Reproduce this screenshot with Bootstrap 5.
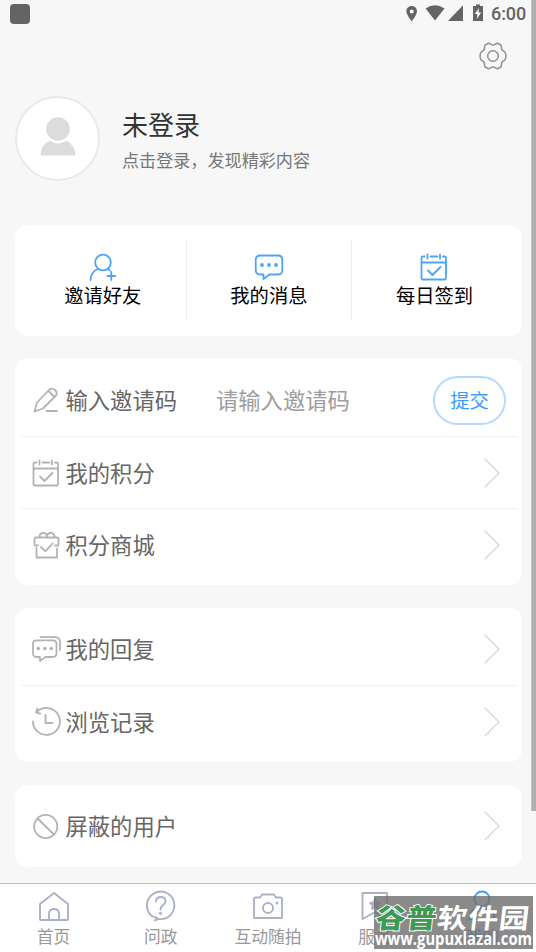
<!DOCTYPE html>
<html lang="zh-CN">
<head>
<meta charset="utf-8">
<meta name="viewport" content="width=device-width, initial-scale=1">
<title>我的</title>
<link href="https://cdn.jsdelivr.net/npm/bootstrap@5.3.0/dist/css/bootstrap.min.css" rel="stylesheet">
<style>
  body { background: #f7f7f7; font-family: "Noto Sans CJK SC", sans-serif; width: 536px; height: 952px; overflow: hidden; color: #666; }
  svg { display: block; flex: none; overflow: visible; }
  .line-icon { fill: none; stroke: currentColor; stroke-width: 1.8; stroke-linecap: round; stroke-linejoin: round; }
  .screen { height: 952px; }
  .status-bar { height: 27px; padding: 0 9px 0 10px; color: #646464; }
  .app-chip { width: 20px; height: 20px; border-radius: 4px; background: #646464; }
  .clock { font: 500 18px/27px Roboto, sans-serif; width: 36px; letter-spacing: -.1px; }
  .tool-row { height: 58px; padding: 0 29px 0 0; color: #919191; }
  .tool-row svg { stroke-width: 1.5; }
  .profile { height: 140px; padding: 11px 15px 0; }
  .avatar { width: 85px; height: 85px; border: 2px solid #e9e9e9; padding-bottom: 4px; }
  .profile-text { margin-left: 22px; padding-top: 11px; }
  .user-name { font-size: 26px; line-height: 34px; color: #333; }
  .user-hint { font-size: 17.1px; line-height: 24px; margin-top: 7px; color: #777; }
  .panel { width: 507px; margin-left: 15px; border: 0; border-radius: 13px; }
  .actions { height: 111px; padding: 15px 5px 16px; }
  .action { width: 165.6px; color: #000; padding-top: 13px; font-size: 19.3px; line-height: 28px; }
  .action + .action { border-left: 1px solid #eee; }
  .action svg { color: #4ea3f8; }
  .menu { padding: 6px 5px 5px 6px; }
  .menu-short { padding-top: 5px; }
  .menu-row { height: 72px; padding: 0 17px 0 10px; font-size: 22.3px; line-height: 32px; border: 0; }
  .menu-row + .menu-row { border-top: 1px solid #f1f1f1; }
  .menu-row .lead-icon { color: #b3b3b3; margin-right: 4.5px; }
  .menu-row .go { color: #d6d6d6; stroke-width: 1.3; stroke-linecap: butt; stroke-linejoin: miter; }
  .code-input { margin-left: 39px; width: 190px; padding: 0; font-size: 22.3px; line-height: 32px; border: 0; background: transparent; }
  .menu-row > span, .code-input { margin-top: -2px; }
  .code-input::placeholder { color: #9d9d9d; opacity: 1; }
  .submit { width: 73px; height: 49px; margin-right: -6px; padding: 0; font-size: 19.3px; color: #3b9cfc; border: 2px solid #b5d9fc; border-radius: 25px; }
  .tabs { height: 69px; border-top: 1px solid #bfbfbf; }
  .tab-item { width: 107.2px; padding-top: 4px; font-size: 16.8px; line-height: 24px; color: #999; }
  .tab-item svg { color: #adb1c6; stroke-width: 1.9; }
  .tab-item.current, .tab-item.current svg { color: #3e9df8; }
  .scroll-thumb { position: absolute; right: 0; top: 0; width: 5px; height: 811px; background: #b0b0b0; border-left: 1px solid #c4c4c4; }
  .site-stamp { position: absolute; left: 374px; top: 896px; width: 159px; height: 53px; background: rgba(112,112,112,.82); color: #fff; white-space: nowrap; }
  .stamp-name { font-size: 30px; line-height: 35px; height: 36px; font-weight: 700; transform: translateY(3px) scaleY(.9) skewX(-6deg); padding-left: 2px; letter-spacing: .8px; }
  .stamp-name b { color: #3d9a55; -webkit-text-stroke: 2px #fff; paint-order: stroke fill; }
  .stamp-url text { font: 700 17px "Open Sans", sans-serif; fill: #fff; }
</style>
<script src="https://cdn.jsdelivr.net/npm/bootstrap@5.3.0/dist/js/bootstrap.bundle.min.js"></script>
</head>
<body>
<svg width="0" height="0" class="position-absolute">
  <symbol id="calendar" viewBox="0 0 28 28"><path d="M4.5 3.5H3A1.5 1.5 0 0 0 1.5 5V25A1.5 1.5 0 0 0 3 26.500H24.500A1.500 1.500 0 0 0 26 25V5A1.500 1.500 0 0 0 24.500 3.500H23M10.500 3.500H17.500M7.500 1.500V5.500M20 1.500V5.500M1.500 9.500H26M8 17.500L12.500 22L20.500 14"/></symbol>
  <symbol id="chevron" viewBox="0 0 16 30"><path d="M.7 .8L15 15L.7 29.200"/></symbol>
</svg>
<main class="screen d-flex flex-column position-relative">
  <header class="status-bar d-flex align-items-center justify-content-between">
    <span class="app-chip"></span>
    <div class="d-flex align-items-center">
      <svg width="85" height="20" viewBox="406 4 85 20" fill="currentColor">
        <path fill-rule="evenodd" d="M411.700 6C408.600 6 406.400 8.400 406.400 11.300C406.400 15 411.700 21.300 411.700 21.300S417 15 417 11.300C417 8.400 414.800 6 411.700 6ZM411.700 9.400A2 2 0 1 1 411.700 13.400A2 2 0 1 1 411.700 9.400Z"/>
        <path d="M425.600 8.500Q435 2 444.500 8.500L435 20.500Z"/>
        <path d="M463 5.300V21H448Z"/>
        <path fill-rule="evenodd" d="M473 6H476V4.500H480V6H483V21H473ZM479 8L474.800 14H477.400L476.800 19L481.200 12.500H478.500Z"/>
      </svg>
      <span class="clock">6:00</span>
    </div>
  </header>
  <div class="tool-row d-flex justify-content-end align-items-center">
    <svg class="line-icon" width="28" height="28" viewBox="0 0 28 28"><path d="M9 1.500Q10.500 1 11.500 2.200Q14 3.800 16.500 2.200Q17.500 1 19 1.500L21.800 3Q22.800 3.800 22.400 5.500Q22.400 8.500 25 9.300Q26.300 10 26.500 11.500Q27.600 14 26.500 16.500Q26.300 18 25 18.700Q22.400 19.500 22.400 22.500Q22.800 24.200 21.800 25L19 26.500Q17.500 27 16.500 25.800Q14 24.200 11.500 25.800Q10.500 27 9 26.500L6.200 25Q5.200 24.200 5.600 22.500Q5.600 19.500 3 18.700Q1.700 18 1.500 16.500Q.4 14 1.500 11.500Q1.700 10 3 9.300Q5.600 8.500 5.600 5.500Q5.200 3.800 6.200 3Z"/><circle cx="14" cy="14" r="5.300"/></svg>
  </div>
  <section class="profile d-flex align-items-start">
    <div class="avatar rounded-circle bg-white d-flex align-items-center justify-content-center">
      <svg width="36" height="39" viewBox="0 0 36 39" fill="#dcdcdc"><circle cx="18" cy="12" r="11.800"/><path d="M.5 38.500Q1 28 9.500 23.800Q18 29 26.500 23.800Q35 28 35.500 38.500Z"/></svg>
    </div>
    <div class="profile-text">
      <div class="user-name">未登录</div>
      <div class="user-hint">点击登录，发现精彩内容</div>
    </div>
  </section>
  <section class="panel card actions flex-row">
    <div class="action d-flex flex-column align-items-center">
      <svg class="line-icon" width="28" height="28" viewBox="0 0 28 28"><circle cx="14" cy="9.500" r="7.800"/><path d="M1.500 27Q2 18 9.500 16M18.500 15.500L21 17.500M22.300 19V27M18.500 23H26.300"/></svg>
      <span>邀请好友</span>
    </div>
    <div class="action d-flex flex-column align-items-center">
      <svg class="line-icon" width="28" height="28" viewBox="0 0 28 28"><path d="M5 2.500H23Q27.300 2.500 27.300 7V17Q27.300 21.500 23 21.500H14.500L8.500 26V21.500H5Q.7 21.500 .7 17V7Q.7 2.500 5 2.500Z"/><g fill="currentColor" stroke="none"><circle cx="7" cy="12" r="1.900"/><circle cx="14" cy="12" r="1.900"/><circle cx="21" cy="12" r="1.900"/></g></svg>
      <span>我的消息</span>
    </div>
    <div class="action d-flex flex-column align-items-center">
      <svg class="line-icon" width="28" height="28"><use href="#calendar"/></svg>
      <span>每日签到</span>
    </div>
  </section>
  <section class="panel card menu" style="margin-top:22px">
    <div class="menu-row d-flex align-items-center">
      <svg class="line-icon lead-icon" width="30" height="30" viewBox="0 0 30 30"><path d="M3.500 26.500L6 17.500L18.500 4.500Q21 2.500 24 5Q27 8 25 10.500L12 23.500L3.500 26.500ZM17.500 6L23.500 12M15.500 26H26"/></svg>
      <span>输入邀请码</span>
      <input class="code-input" type="text" placeholder="请输入邀请码" aria-label="邀请码">
      <button class="submit btn ms-auto">提交</button>
    </div>
    <div class="menu-row d-flex align-items-center">
      <svg class="line-icon lead-icon" width="30" height="30" viewBox="-1 -1 30 30"><use href="#calendar" width="28" height="28"/></svg>
      <span>我的积分</span>
      <svg class="line-icon go ms-auto" width="16" height="30"><use href="#chevron"/></svg>
    </div>
    <div class="menu-row d-flex align-items-center">
      <svg class="line-icon lead-icon" width="30" height="30" viewBox="0 0 30 30"><path d="M7 15.500H4.500Q3.500 15.500 3.500 14.500V9Q3.500 7.500 5 7.500H26Q27.500 7.500 27.500 9V14.500Q27.500 15.500 26.500 15.500H24M5.500 18V27.500H26V18.500M8.500 7Q8.500 3 12.300 3Q16 3 16 7Q16 3 19.800 3Q23.500 3 23.500 7M10 17L14.500 21.300L21.500 13.500"/></svg>
      <span>积分商城</span>
      <svg class="line-icon go ms-auto" width="16" height="30"><use href="#chevron"/></svg>
    </div>
  </section>
  <section class="panel card menu menu-short" style="margin-top:23px;height:154px">
    <div class="menu-row d-flex align-items-center">
      <svg class="line-icon lead-icon" width="30" height="30" viewBox="0 0 30 30"><path d="M5.500 6.300H22Q25.500 6.300 25.500 10V19Q25.500 23 22 23H14.500L9 27V23H5.500Q2 23 2 19V10Q2 6.300 5.500 6.300ZM9.500 3.200H24Q29 3.200 29 8.500V16"/><g fill="currentColor" stroke="none"><circle cx="7.300" cy="14.500" r="1.800"/><circle cx="13.800" cy="14.500" r="1.800"/><circle cx="20.300" cy="14.500" r="1.800"/></g></svg>
      <span>我的回复</span>
      <svg class="line-icon go ms-auto" width="16" height="30"><use href="#chevron"/></svg>
    </div>
    <div class="menu-row d-flex align-items-center">
      <svg class="line-icon lead-icon" width="30" height="30" viewBox="0 0 30 30"><path d="M1.900 14.500A13.500 13.500 0 1 0 6 4.700M6.500 1.500L5 5.300L9.200 6.700M14.500 8V16H21.500"/></svg>
      <span>浏览记录</span>
      <svg class="line-icon go ms-auto" width="16" height="30"><use href="#chevron"/></svg>
    </div>
  </section>
  <section class="panel card menu menu-short" style="margin-top:23px;height:82px">
    <div class="menu-row d-flex align-items-center">
      <svg class="line-icon lead-icon" width="30" height="30" viewBox="0 0 30 30"><circle cx="14.700" cy="15.500" r="11.600"/><path d="M6.500 7.500L23 23.500"/></svg>
      <span>屏蔽的用户</span>
      <svg class="line-icon go ms-auto" width="16" height="30"><use href="#chevron"/></svg>
    </div>
  </section>
  <nav class="tabs bg-white d-flex mt-auto">
    <div class="tab-item d-flex flex-column align-items-center">
      <svg class="line-icon" width="36" height="36" viewBox="0 0 36 36"><path d="M4 16L18 5L32 16V31.500Q32 32 31.500 32H4.500Q4 32 4 31.500ZM13 31.500V26Q13 21 18 21Q23 21 23 26V31.500"/></svg>
      <span>首页</span>
    </div>
    <div class="tab-item d-flex flex-column align-items-center">
      <svg class="line-icon" width="36" height="36" viewBox="0 0 36 36"><path d="M12.500 32L15.500 30.900A13.700 13.700 0 1 0 9.500 28.400L14 29.900L12 32.400ZM13 13.500Q13 9 18 9Q22.500 9 22.500 13Q22.500 15.500 20 17Q17.500 19 17.500 21.500"/><circle cx="17.500" cy="25.300" r=".7"/></svg>
      <span>问政</span>
    </div>
    <div class="tab-item d-flex flex-column align-items-center">
      <svg class="line-icon" width="36" height="36" viewBox="0 0 36 36"><path d="M5.500 9.500H10L12 6.500H24L26 9.500H30.500Q32 9.500 32 11V30H4V11Q4 9.500 5.500 9.500Z"/><circle cx="18" cy="20" r="5"/><circle cx="27" cy="15" r=".6"/></svg>
      <span>互动随拍</span>
    </div>
    <div class="tab-item d-flex flex-column align-items-center">
      <svg class="line-icon" width="36" height="36" viewBox="0 0 36 36"><path d="M5.500 5H30V31L18 24L5.500 31Z"/><path fill="currentColor" d="M18 11L19.500 14.500L23 15L20.300 17.300L21 21L18 19L15 21L15.700 17.300L13 15L16.500 14.500Z"/></svg>
      <span>服务</span>
    </div>
    <div class="tab-item current d-flex flex-column align-items-center">
      <svg class="line-icon" width="36" height="36" viewBox="0 0 36 36"><circle cx="18" cy="11" r="7.500"/><path d="M5.500 31Q6 20 18 20Q30 20 30.500 31Z"/></svg>
      <span>我的</span>
    </div>
  </nav>
  <div class="scroll-thumb"></div>
  <div class="site-stamp">
    <div class="stamp-name"><b>谷普</b>软件园</div>
    <svg class="stamp-url" width="159" height="17"><text x="1" y="13" textLength="157" lengthAdjust="spacingAndGlyphs">www.gupuxlazal.com</text></svg>
  </div>
</main>
</body>
</html>
